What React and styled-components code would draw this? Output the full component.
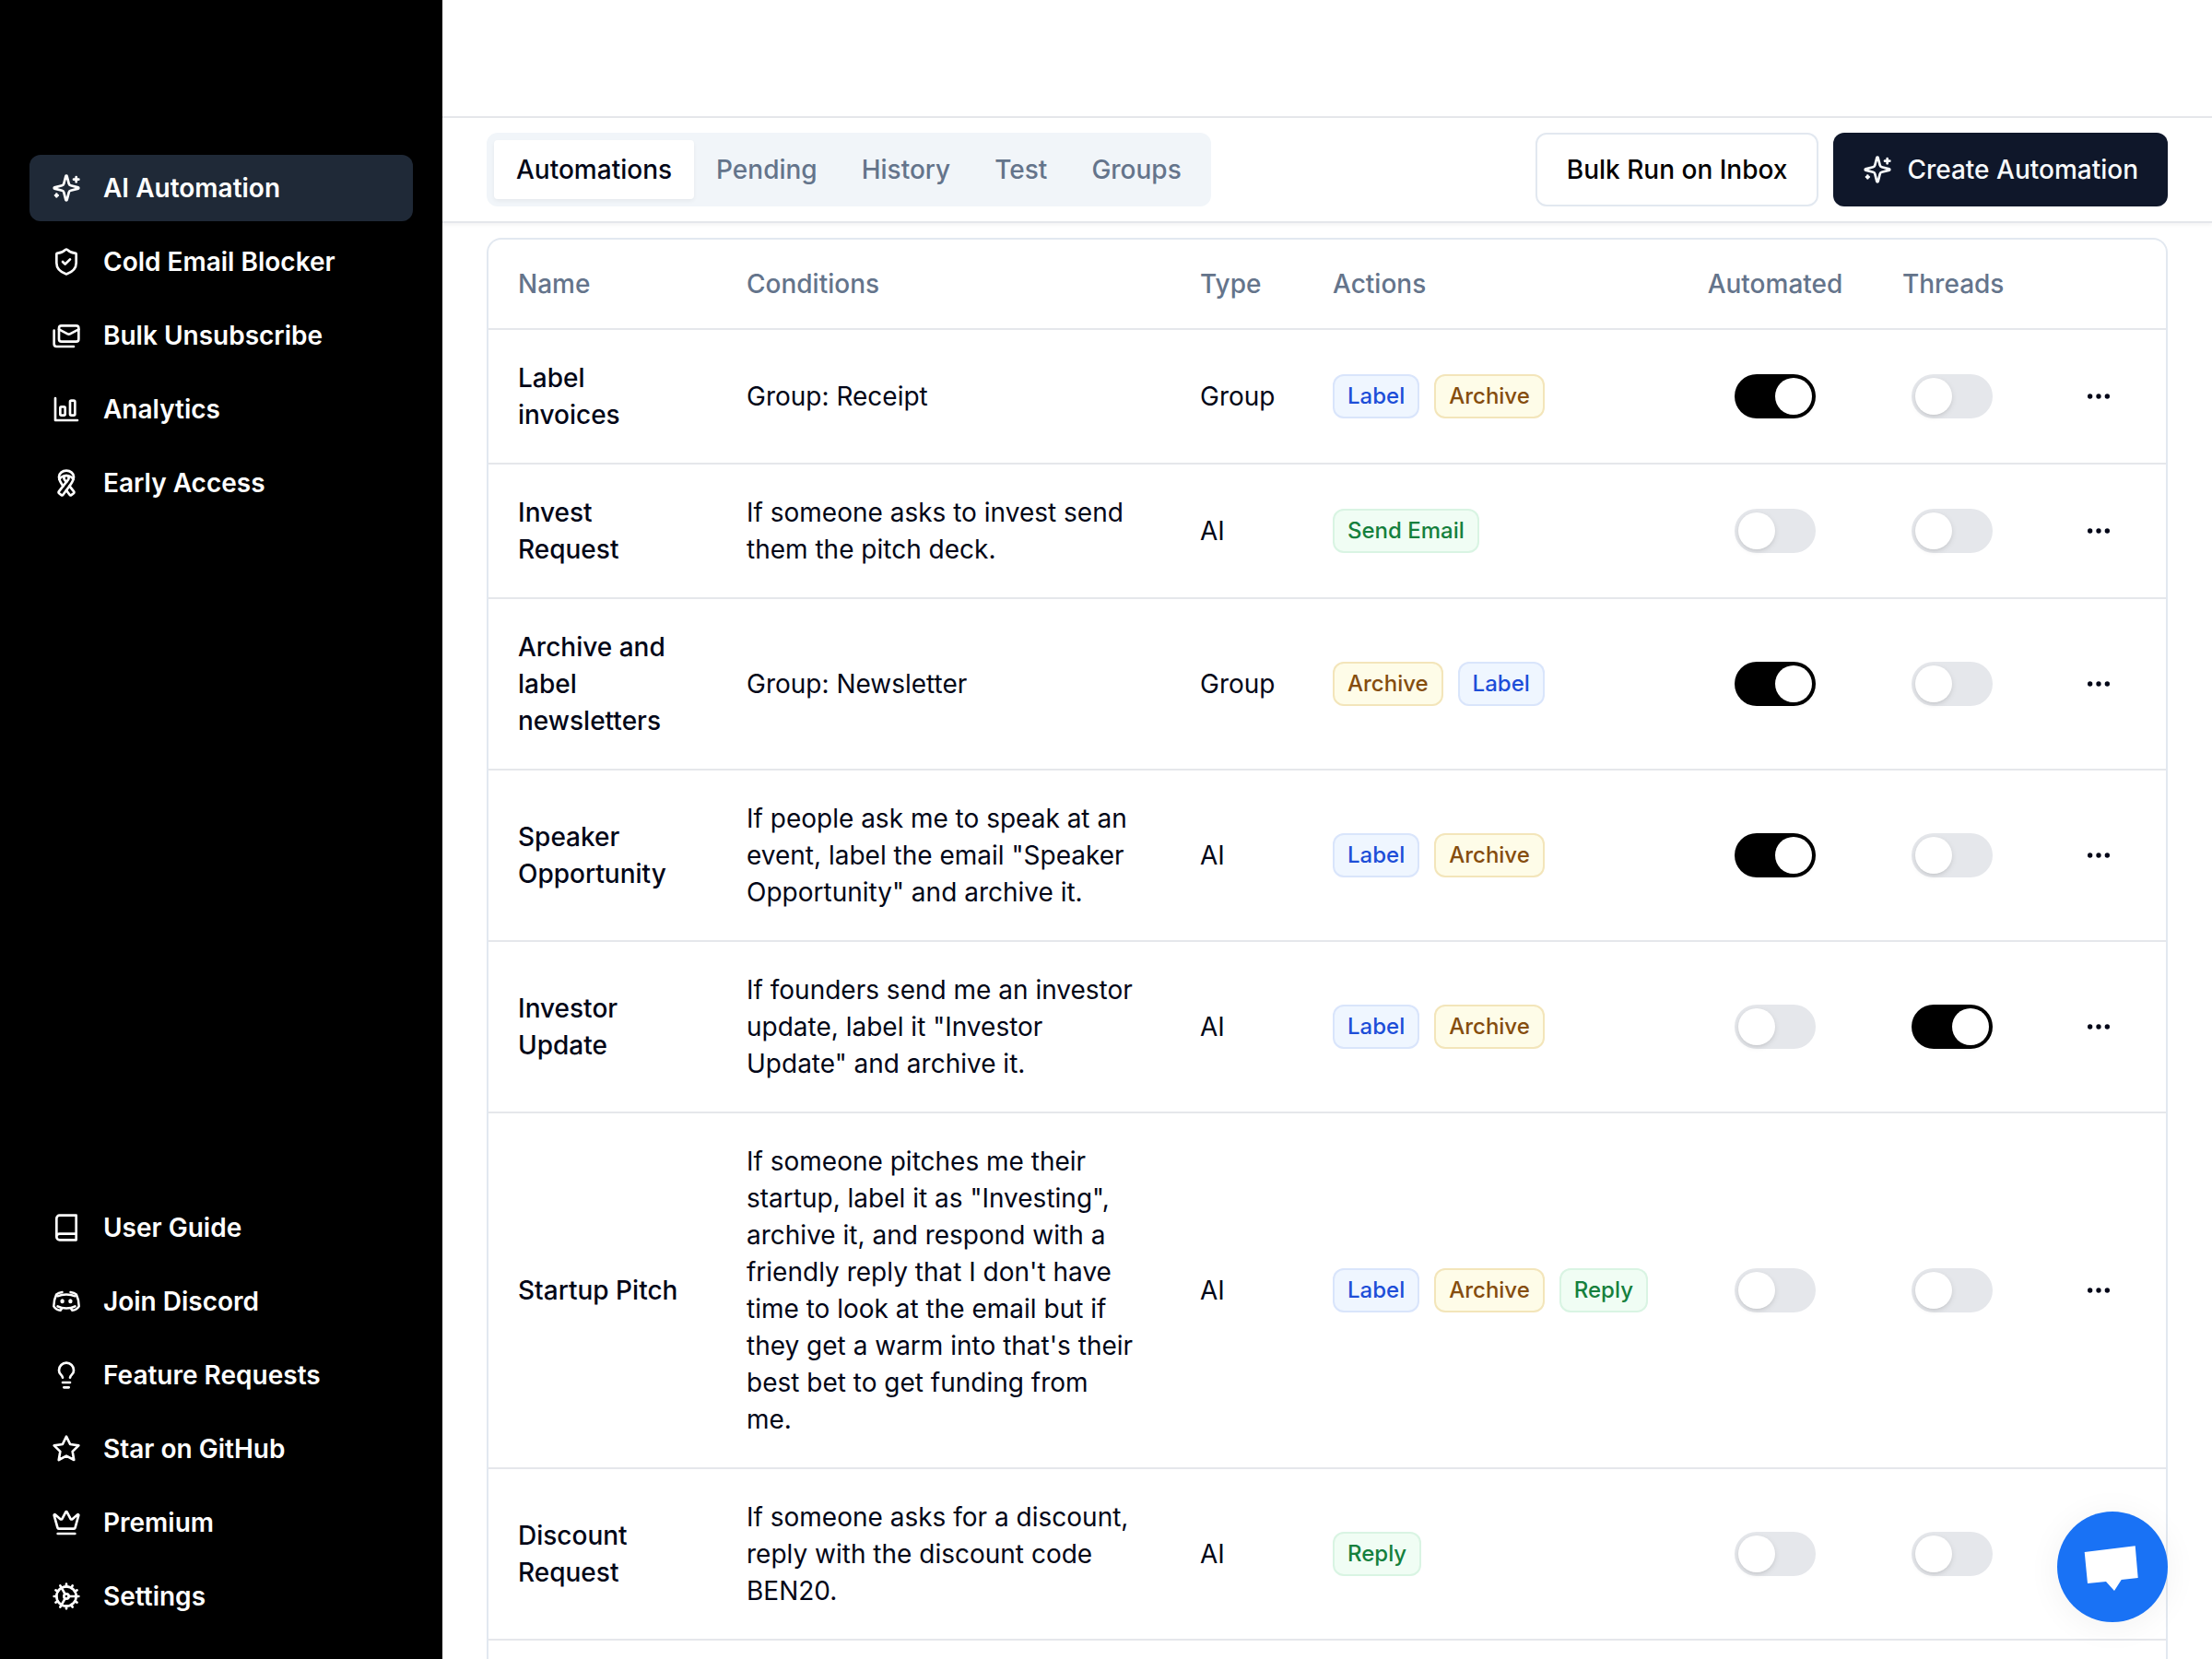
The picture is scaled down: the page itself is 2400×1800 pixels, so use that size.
import React, { useState } from "react";
import styled, { createGlobalStyle, css } from "styled-components";
import { Cog, Crown, Ellipsis, Ribbon, ShieldCheck } from "lucide-react";

const GlobalStyle = createGlobalStyle`
  *, *::before, *::after { box-sizing: border-box; }
  body {
    margin: 0;
    background: #fff;
    color: #020617;
    font-family: Inter, "Liberation Sans", sans-serif;
    font-size: 28px;
    line-height: 40px;
  }
  button, input { font: inherit; color: inherit; margin: 0; }
`;

/* ---------- icons ---------- */

const IconBase = ({ children }) => (
  <svg
    width="32"
    height="32"
    viewBox="0 0 24 24"
    fill="none"
    stroke="currentColor"
    strokeWidth="2"
    strokeLinecap="round"
    strokeLinejoin="round"
    aria-hidden="true"
  >
    {children}
  </svg>
);

const SparklesIcon = () => (
  <IconBase>
    <path d="M9.937 15.5A2 2 0 0 0 8.5 14.063l-6.135-1.582a.5.5 0 0 1 0-.962L8.5 9.936A2 2 0 0 0 9.937 8.5l1.582-6.135a.5.5 0 0 1 .963 0L14.063 8.5A2 2 0 0 0 15.5 9.937l6.135 1.581a.5.5 0 0 1 0 .964L15.5 14.063a2 2 0 0 0-1.437 1.437l-1.582 6.135a.5.5 0 0 1-.963 0z" />
    <path d="M20 3v4" />
    <path d="M22 5h-4" />
    <path d="M4 17v2" />
    <path d="M5 18H3" />
  </IconBase>
);

const MailsIcon = () => (
  <IconBase>
    <rect width="16" height="13" x="6" y="4" rx="2" />
    <path d="m22 7-7.1 3.78c-.57.3-1.23.3-1.8 0L6 7" />
    <path d="M2 8v11c0 1.1.9 2 2 2h14" />
  </IconBase>
);

const ChartIcon = () => (
  <IconBase>
    <path d="M3 3v18h18" />
    <rect width="4" height="7" x="7" y="10" rx="1" />
    <rect width="4" height="12" x="15" y="5" rx="1" />
  </IconBase>
);

const BookIcon = () => (
  <IconBase>
    <path d="M4 19.5v-15A2.5 2.5 0 0 1 6.5 2H20v20H6.5a2.5 2.5 0 0 1 0-5H20" />
  </IconBase>
);

const DiscordIcon = () => (
  <svg
    width="32"
    height="32"
    viewBox="0 0 32 32"
    fill="none"
    stroke="currentColor"
    strokeWidth="2.5"
    strokeLinecap="round"
    strokeLinejoin="round"
    aria-hidden="true"
  >
    <path d="M11.5 6C8.8 6.3 6.6 7.2 5.2 8.4C3.4 12.200 2.300 16.800 2.300 21.300C3.900 23.900 6.800 25.500 9.800 25.700L11 23.600" />
    <path d="M20.500 6C23.200 6.300 25.400 7.200 26.800 8.400C28.600 12.200 29.700 16.800 29.700 21.300C28.100 23.900 25.200 25.500 22.200 25.700L21 23.600" />
    <path d="M6.500 10.300C12 7.900 20 7.900 25.500 10.300" />
    <path d="M6.500 21.300C12 24.300 20 24.300 25.500 21.300" />
    <ellipse cx="11.600" cy="15.800" rx="2.200" ry="2.500" fill="currentColor" stroke="none" />
    <ellipse cx="20.400" cy="15.800" rx="2.200" ry="2.500" fill="currentColor" stroke="none" />
  </svg>
);

const LightbulbIcon = () => (
  <IconBase>
    <path d="M15 14c.2-1 .7-1.7 1.5-2.5 1-.9 1.5-2.2 1.5-3.5A6 6 0 0 0 6 8c0 1 .2 2.2 1.5 3.5.7.7 1.3 1.5 1.5 2.5" />
    <path d="M9 18h6" />
    <path d="M10 22h4" />
  </IconBase>
);

const StarIcon = () => (
  <IconBase>
    <polygon points="12 2 15.09 8.26 22 9.27 17 14.14 18.18 21.02 12 17.77 5.82 21.02 7 14.14 2 9.27 8.91 8.26 12 2" />
  </IconBase>
);

/* ---------- layout ---------- */

const Layout = styled.div`
  display: flex;
  min-height: 100vh;
`;

const Sidebar = styled.aside`
  position: sticky;
  top: 0;
  display: flex;
  flex-direction: column;
  justify-content: space-between;
  flex: none;
  width: 480px;
  height: 100vh;
  padding: 168px 32px 32px;
  background: #000;
  color: #fff;
`;

const Nav = styled.nav`
  display: flex;
  flex-direction: column;
  gap: 8px;
`;

const NavLink = styled.a`
  display: flex;
  align-items: center;
  gap: 24px;
  padding: 12px 24px;
  border-radius: 12px;
  background: ${(p) => (p.$active ? "#1f2937" : "transparent")};
  color: inherit;
  font-weight: 600;
  line-height: 48px;
  text-decoration: none;

  svg {
    flex: none;
    width: 32px;
    height: 32px;
  }
`;

const Main = styled.main`
  display: flex;
  flex-direction: column;
  flex: 1;
  min-width: 0;
`;

const TopBar = styled.header`
  height: 128px;
  border-bottom: 2px solid #e5e7eb;
`;

const Toolbar = styled.div`
  display: flex;
  align-items: center;
  justify-content: space-between;
  padding: 16px 48px;
  border-bottom: 2px solid #e5e7eb;
  background: #fff;
  box-shadow: 0 2px 4px rgba(0, 0, 0, 0.05);
`;

const TabList = styled.div`
  display: flex;
  padding: 8px;
  border-radius: 12px;
  background: #f1f5f9;
`;

const Tab = styled.button`
  padding: 12px 24px;
  border: 0;
  border-radius: 4px;
  background: transparent;
  color: #64748b;
  font-weight: 500;
  cursor: pointer;

  ${(p) =>
    p.$active &&
    css`
      background: #fff;
      color: #020617;
      box-shadow: 0 2px 4px rgba(0, 0, 0, 0.05);
    `}
`;

const ButtonGroup = styled.div`
  display: flex;
  gap: 16px;
`;

const Button = styled.button`
  display: inline-flex;
  align-items: center;
  gap: 16px;
  height: 80px;
  padding: 0 32px;
  border: ${(p) => (p.$primary ? "0" : "2px solid #e2e8f0")};
  border-radius: 12px;
  background: ${(p) => (p.$primary ? "#0f172a" : "#fff")};
  color: ${(p) => (p.$primary ? "#f8fafc" : "#000")};
  font-weight: 500;
  cursor: pointer;
`;

const Card = styled.section`
  flex: 1;
  margin: 16px 48px 0;
  border: 2px solid #e2e8f0;
  border-bottom: 0;
  border-radius: 16px 16px 0 0;
`;

/* ---------- table ---------- */

const Table = styled.table`
  width: 100%;
  table-layout: fixed;
  border-spacing: 0;
`;

const Col = styled.col`
  width: ${(p) => (p.$width ? `${p.$width}px` : "auto")};
`;

const HeadCell = styled.th`
  height: 98px;
  padding: 0 32px;
  border-bottom: 2px solid #e5e7eb;
  color: #64748b;
  font-weight: 500;
  text-align: ${(p) => (p.$center ? "center" : "left")};
`;

const Cell = styled.td`
  padding: 32px;
  border-bottom: 2px solid #e5e7eb;
  font-weight: ${(p) => (p.$strong ? 500 : 400)};
  text-align: ${(p) => (p.$center ? "center" : "left")};
  vertical-align: middle;
`;

const Conditions = styled.div`
  max-width: 424px;
`;

const Badges = styled.div`
  display: flex;
  gap: 16px;
`;

const tones = {
  blue: ["#eff6ff", "#1d4ed8", "rgba(29, 78, 216, 0.1)"],
  yellow: ["#fefce8", "#854d0e", "rgba(202, 138, 4, 0.2)"],
  green: ["#f0fdf4", "#15803d", "rgba(22, 163, 74, 0.1)"],
};

const Badge = styled.span`
  padding: 8px 16px;
  border-radius: 12px;
  background: ${(p) => tones[p.$tone][0]};
  color: ${(p) => tones[p.$tone][1]};
  box-shadow: inset 0 0 0 2px ${(p) => tones[p.$tone][2]};
  font-size: 24px;
  font-weight: 500;
  line-height: 32px;
  white-space: nowrap;
`;

const Switch = styled.input.attrs({ type: "checkbox", role: "switch" })`
  display: inline-block;
  width: 88px;
  height: 48px;
  padding: 4px;
  border-radius: 24px;
  appearance: none;
  background: #e5e7eb;
  vertical-align: middle;
  cursor: pointer;

  &::before {
    content: "";
    display: block;
    width: 40px;
    height: 40px;
    border-radius: 50%;
    background: #fff;
    box-shadow: 0 2px 6px rgba(0, 0, 0, 0.1), 0 2px 4px -2px rgba(0, 0, 0, 0.1);
  }

  &:checked {
    background: #000;
  }

  &:checked::before {
    margin-left: auto;
  }
`;

const MenuButton = styled.button`
  display: flex;
  margin: 0 auto;
  padding: 4px 16px;
  border: 0;
  background: transparent;
  cursor: pointer;
`;

const ChatButton = styled.button`
  position: fixed;
  right: 48px;
  bottom: 40px;
  width: 120px;
  height: 120px;
  padding: 0;
  border: 0;
  border-radius: 50%;
  background: #1972f5;
  box-shadow: 0 4px 36px rgba(0, 0, 0, 0.06);
  cursor: pointer;

  svg {
    display: block;
  }
`;

/* ---------- content ---------- */

const primaryLinks = [
  ["AI Automation", SparklesIcon],
  ["Cold Email Blocker", ShieldCheck],
  ["Bulk Unsubscribe", MailsIcon],
  ["Analytics", ChartIcon],
  ["Early Access", Ribbon],
];

const secondaryLinks = [
  ["User Guide", BookIcon],
  ["Join Discord", DiscordIcon],
  ["Feature Requests", LightbulbIcon],
  ["Star on GitHub", StarIcon],
  ["Premium", Crown],
  ["Settings", Cog],
];

const tabs = ["Automations", "Pending", "History", "Test", "Groups"];

const actionTones = {
  Label: "blue",
  Archive: "yellow",
  "Send Email": "green",
  Reply: "green",
};

const rules = [
  {
    name: "Label invoices",
    conditions: "Group: Receipt",
    type: "Group",
    actions: ["Label", "Archive"],
    automated: true,
  },
  {
    name: "Invest Request",
    conditions: "If someone asks to invest send them the pitch deck.",
    type: "AI",
    actions: ["Send Email"],
  },
  {
    name: "Archive and label newsletters",
    conditions: "Group: Newsletter",
    type: "Group",
    actions: ["Archive", "Label"],
    automated: true,
  },
  {
    name: "Speaker Opportunity",
    conditions:
      'If people ask me to speak at an event, label the email "Speaker Opportunity" and archive it.',
    type: "AI",
    actions: ["Label", "Archive"],
    automated: true,
  },
  {
    name: "Investor Update",
    conditions:
      'If founders send me an investor update, label it "Investor Update" and archive it.',
    type: "AI",
    actions: ["Label", "Archive"],
    threads: true,
  },
  {
    name: "Startup Pitch",
    conditions:
      'If someone pitches me their startup, label it as "Investing", archive it, and respond with a friendly reply that I don\'t have time to look at the email but if they get a warm into that\'s their best bet to get funding from me.',
    type: "AI",
    actions: ["Label", "Archive", "Reply"],
  },
  {
    name: "Discount Request",
    conditions:
      "If someone asks for a discount, reply with the discount code BEN20.",
    type: "AI",
    actions: ["Reply"],
  },
];

const NavGroup = ({ label, links, current }) => (
  <Nav aria-label={label}>
    {links.map(([name, Icon]) => (
      <NavLink
        key={name}
        href="#"
        $active={name === current}
        aria-current={name === current ? "page" : undefined}
      >
        <Icon />
        {name}
      </NavLink>
    ))}
  </Nav>
);

const RuleRow = ({ rule }) => (
  <tr>
    <Cell $strong>{rule.name}</Cell>
    <Cell>
      <Conditions>{rule.conditions}</Conditions>
    </Cell>
    <Cell>{rule.type}</Cell>
    <Cell>
      <Badges>
        {rule.actions.map((action) => (
          <Badge key={action} $tone={actionTones[action]}>
            {action}
          </Badge>
        ))}
      </Badges>
    </Cell>
    <Cell $center>
      <Switch defaultChecked={rule.automated} aria-label={`Automate ${rule.name}`} />
    </Cell>
    <Cell $center>
      <Switch defaultChecked={rule.threads} aria-label={`Run ${rule.name} on threads`} />
    </Cell>
    <Cell $center>
      <MenuButton type="button" aria-label={`Options for ${rule.name}`}>
        <Ellipsis size={32} />
      </MenuButton>
    </Cell>
  </tr>
);

export default function App() {
  const [tab, setTab] = useState("Automations");

  return (
    <>
      <GlobalStyle />
      <Layout>
        <Sidebar>
          <NavGroup label="Main" links={primaryLinks} current="AI Automation" />
          <NavGroup label="More" links={secondaryLinks} />
        </Sidebar>
        <Main>
          <TopBar />
          <Toolbar>
            <TabList role="tablist">
              {tabs.map((name) => (
                <Tab
                  key={name}
                  type="button"
                  role="tab"
                  aria-selected={name === tab}
                  $active={name === tab}
                  onClick={() => setTab(name)}
                >
                  {name}
                </Tab>
              ))}
            </TabList>
            <ButtonGroup>
              <Button type="button">Bulk Run on Inbox</Button>
              <Button type="button" $primary>
                <SparklesIcon />
                Create Automation
              </Button>
            </ButtonGroup>
          </Toolbar>
          <Card>
            <Table>
              <colgroup>
                <Col $width={248} />
                <Col />
                <Col $width={144} />
                <Col $width={406} />
                <Col $width={212} />
                <Col $width={172} />
                <Col $width={146} />
              </colgroup>
              <thead>
                <tr>
                  <HeadCell scope="col">Name</HeadCell>
                  <HeadCell scope="col">Conditions</HeadCell>
                  <HeadCell scope="col">Type</HeadCell>
                  <HeadCell scope="col">Actions</HeadCell>
                  <HeadCell scope="col" $center>Automated</HeadCell>
                  <HeadCell scope="col" $center>Threads</HeadCell>
                  <HeadCell scope="col" />
                </tr>
              </thead>
              <tbody>
                {rules.map((rule) => (
                  <RuleRow key={rule.name} rule={rule} />
                ))}
              </tbody>
            </Table>
          </Card>
        </Main>
      </Layout>
      <ChatButton type="button" aria-label="Open chat">
        <svg width="120" height="120" viewBox="0 0 120 120" aria-hidden="true">
          <polygon
            fill="#fff"
            points="29.7,44 84.7,37.3 87.7,72 69.7,74 62,86 53,76 33,78"
          />
        </svg>
      </ChatButton>
    </>
  );
}
